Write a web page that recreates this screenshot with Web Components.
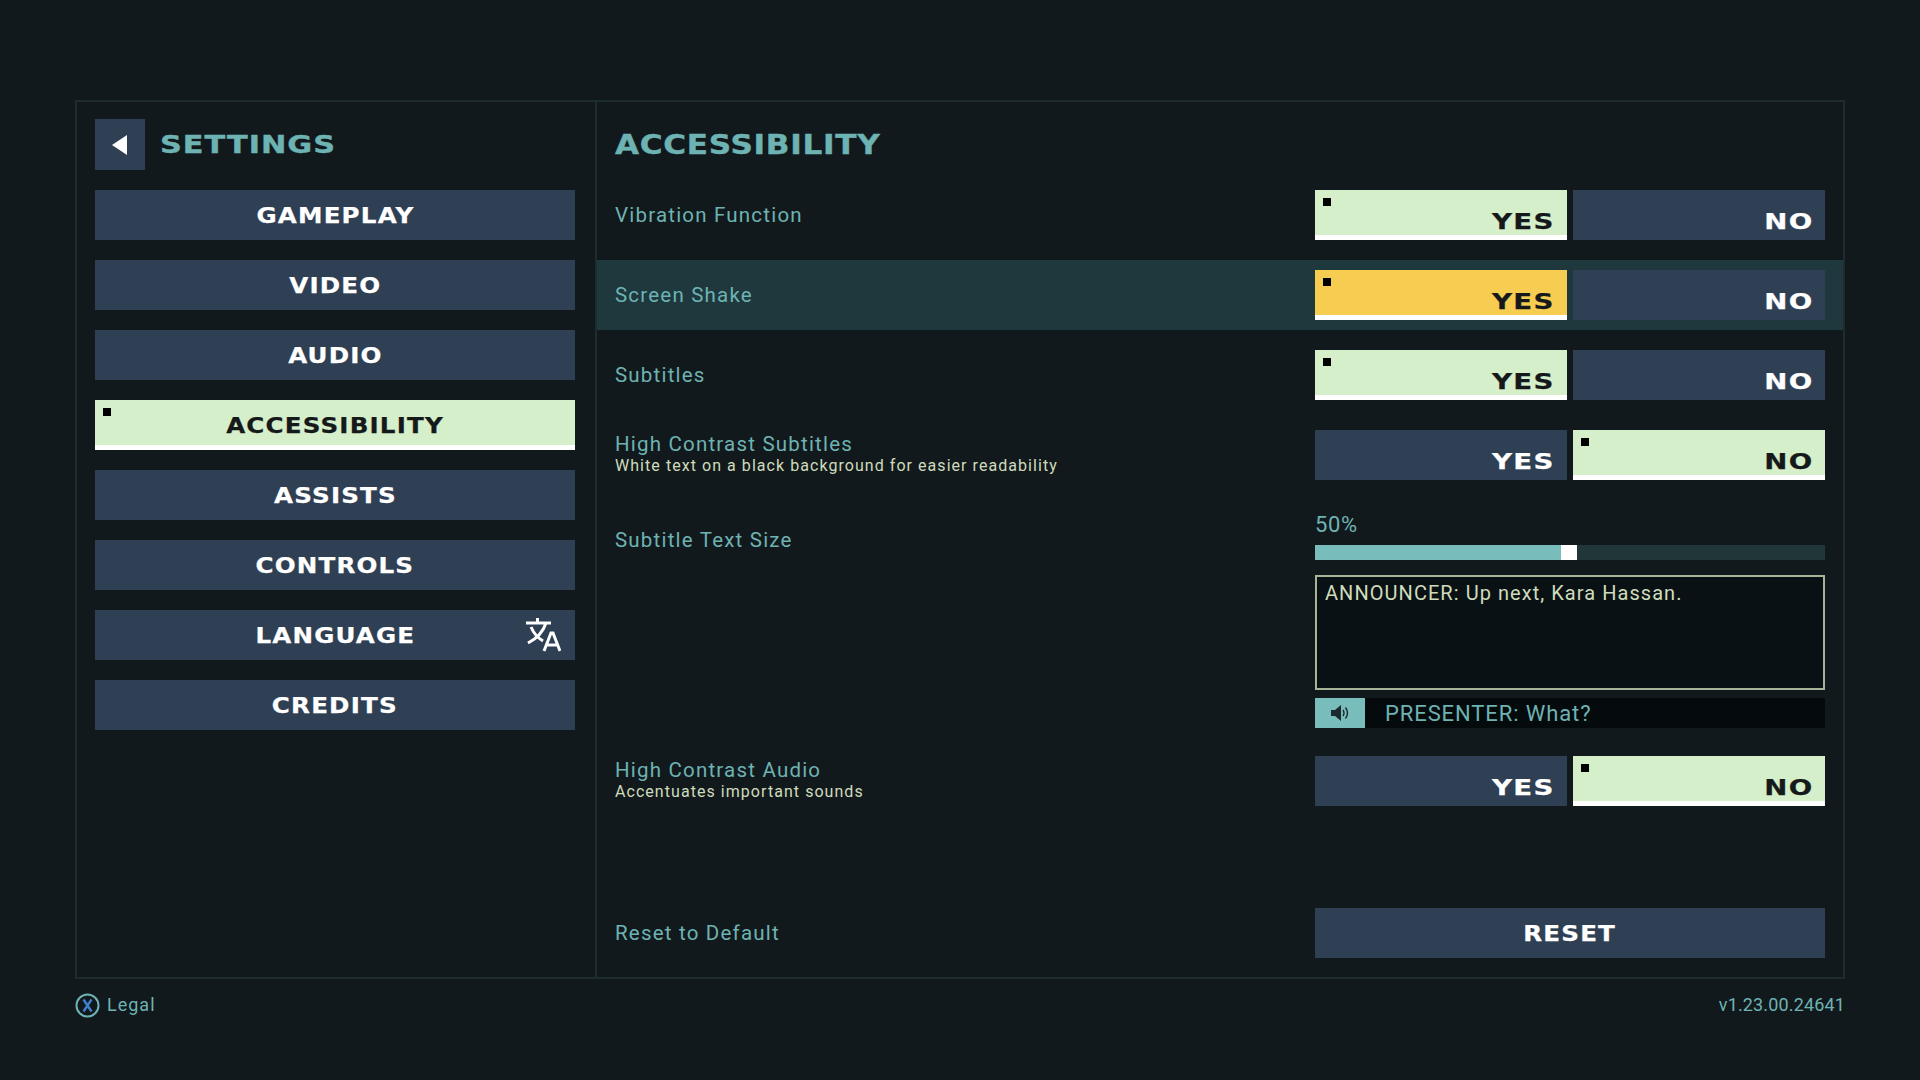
<!DOCTYPE html>
<html lang="en"><head><meta charset="utf-8"><title>Settings</title>
<style>
html,body{margin:0;padding:0;background:#12191c;}
body{width:1920px;height:1080px;overflow:hidden;font-family:"Roboto","Liberation Sans",sans-serif;}
</style></head>
<body>
<settings-screen>
  <settings-nav slot="nav">
    <nav-button>GAMEPLAY</nav-button>
    <nav-button>VIDEO</nav-button>
    <nav-button>AUDIO</nav-button>
    <nav-button selected>ACCESSIBILITY</nav-button>
    <nav-button>ASSISTS</nav-button>
    <nav-button>CONTROLS</nav-button>
    <nav-button icon>LANGUAGE</nav-button>
    <nav-button>CREDITS</nav-button>
  </settings-nav>
  <settings-panel slot="panel" heading="ACCESSIBILITY">
    <option-row label="Vibration Function"><yes-no value="yes"></yes-no></option-row>
    <option-row label="Screen Shake" focused><yes-no value="yes" focused></yes-no></option-row>
    <option-row label="Subtitles"><yes-no value="yes"></yes-no></option-row>
    <option-row label="High Contrast Subtitles" hint="White text on a black background for easier readability"><yes-no value="no"></yes-no></option-row>
    <subtitle-size></subtitle-size>
    <option-row label="High Contrast Audio" hint="Accentuates important sounds"><yes-no value="no"></yes-no></option-row>
    <option-row label="Reset to Default" class="end"><reset-button>RESET</reset-button></option-row>
  </settings-panel>
  <settings-footer slot="footer" version="v1.23.00.24641"></settings-footer>
</settings-screen>
<script>
const BTN='#2f4054',SEL='#d5efca',TEAL='#6db3b3',DIM='#cfdcbc';
function def(name,html,init){
  customElements.define(name,class extends HTMLElement{
    constructor(){super();const r=this.attachShadow({mode:'open'});r.innerHTML=typeof html==='function'?html(this):html;}
    connectedCallback(){
      if(typeof html==='function'){this.shadowRoot.innerHTML=html(this);}
      if(init)init(this);
    }
  });
}
def('wide-text',`<style>:host{display:inline-block;white-space:nowrap;font:700 var(--wt-size,21px)/1 "DejaVu Sans",sans-serif;letter-spacing:var(--wt-ls,1px);transform:scaleX(var(--wt-sx,1.17));transform-origin:var(--wt-origin,center);-webkit-text-stroke:var(--wt-stroke,.25px) currentColor;}</style><slot></slot>`);
def('settings-screen',`<style>
:host{display:flex;flex-direction:column;box-sizing:border-box;width:1920px;height:1080px;padding:100px 75px 0;}
.frame{display:grid;grid-template-columns:520px 1fr;height:879px;border:2px solid #1c2c2f;box-sizing:border-box;}
.l{border-right:2px solid #1c2c2f;min-width:0;}
</style><div class="frame"><div class="l"><slot name="nav"></slot></div><slot name="panel"></slot></div><slot name="footer"></slot>`);
def('settings-nav',`<style>
:host{display:block;box-sizing:border-box;padding:17px 16px 0 18px;}
header{display:flex;align-items:center;gap:15px;height:51px;margin-bottom:20px;}
.b{width:50px;height:51px;background:${BTN};display:flex;align-items:center;justify-content:center;}
wide-text{color:${TEAL};--wt-size:24px;--wt-sx:1.263;--wt-ls:.8px;--wt-origin:left;--wt-stroke:.4px;margin-top:1px;}
.items{display:flex;flex-direction:column;gap:20px;}
</style><header><div class="b"><svg width="16" height="20" viewBox="0 0 16 20"><path d="M15 0V20L0 10Z" fill="#fff"/></svg></div><wide-text>SETTINGS</wide-text></header><div class="items"><slot></slot></div>`);
def('nav-button',el=>`<style>
:host{display:flex;align-items:center;justify-content:center;position:relative;box-sizing:border-box;height:50px;width:480px;padding-top:2px;background:${el.hasAttribute('selected')?SEL:BTN};color:${el.hasAttribute('selected')?'#15191a':'#fff'};${el.hasAttribute('selected')?'border-bottom:5px solid #fff;padding-top:7px;':''}}
.sq{position:absolute;left:8px;top:8px;width:8px;height:8px;background:#000;}
svg{position:absolute;right:14px;top:7px;}
</style>${el.hasAttribute('selected')?'<i class="sq"></i>':''}<wide-text><slot></slot></wide-text>${el.hasAttribute('icon')?`<svg width="36" height="36" viewBox="0 0 36 36" fill="none" stroke="#fff" stroke-width="3"><path d="M1 6H26M12.5 1V6M21 6C18 15 11 22 3 26M6 10C9 17 13 21 18 24"/><path d="M19 34L26 16H28L35 34M21.5 28H32.5"/></svg>`:''}`);
def('settings-panel',el=>`<style>
:host{display:block;min-width:0;}
h2{margin:0;height:78px;padding:30px 18px 0;box-sizing:border-box;font-weight:400;color:${TEAL};--wt-size:26px;--wt-sx:1.195;--wt-ls:.6px;--wt-origin:left;--wt-stroke:.4px;}
.rows{display:flex;flex-direction:column;gap:10px;}
::slotted(option-row.end){margin-top:72px;}
</style><h2><wide-text>${el.getAttribute('heading')||''}</wide-text></h2><div class="rows"><slot></slot></div>`);
def('option-row',el=>`<style>
:host{display:flex;align-items:center;justify-content:space-between;box-sizing:border-box;height:70px;padding:0 18px;${el.hasAttribute('focused')?'background:#1e383e;':''}}
.t{display:flex;flex-direction:column;letter-spacing:1.2px;${el.hasAttribute('hint')?'padding-bottom:3px;':''}}
.n{font-size:20.5px;line-height:24px;color:${TEAL};}
.h{font-size:16px;line-height:20px;color:${DIM};letter-spacing:1.05px;}
</style><div class="t"><div class="n">${el.getAttribute('label')}</div>${el.hasAttribute('hint')?`<div class="h">${el.getAttribute('hint')}</div>`:''}</div><slot></slot>`);
def('yes-no',el=>{const v=el.getAttribute('value'),f=el.hasAttribute('focused');
 const o=(x,l)=>`<option-button ${v===x?'on':''} ${v===x&&f?'focused':''}>${l}</option-button>`;
 return `<style>:host{display:flex;gap:6px;width:510px;}</style>${o('yes','YES')}${o('no','NO')}`});
def('option-button',el=>{const on=el.hasAttribute('on'),f=el.hasAttribute('focused');return `<style>
:host{display:flex;align-items:flex-end;justify-content:flex-end;position:relative;box-sizing:border-box;width:252px;height:50px;padding:0 12px ${on?2.5:7.5}px 0;background:${on?(f?'#f6cd50':SEL):BTN};color:${on?'#15191a':'#fff'};${on?'border-bottom:5px solid #fff;':''}}
.sq{position:absolute;left:8px;top:8px;width:8px;height:8px;background:#000;}
wide-text{--wt-origin:right;--wt-sx:1.315;}
</style>${on?'<i class="sq"></i>':''}<wide-text><slot></slot></wide-text>`});
def('reset-button',`<style>:host{display:flex;align-items:center;justify-content:center;box-sizing:border-box;padding-top:2px;width:510px;height:50px;background:${BTN};color:#fff;}</style><wide-text><slot></slot></wide-text>`);
def('subtitle-size',`<style>
:host{display:flex;justify-content:space-between;box-sizing:border-box;padding:13px 18px 0;height:236px;}
.n{font-size:20.5px;line-height:24px;color:${TEAL};letter-spacing:1.2px;padding-top:15px;}
.c{width:510px;display:flex;flex-direction:column;}
.p{font-size:22px;line-height:24px;color:${TEAL};height:32px;letter-spacing:.6px;}
.track{height:15px;background:#213638;margin-bottom:15px;display:flex;}
.fill{width:246px;background:#78bcbc;}
.th{width:16px;background:#fff;}
.box{height:115px;box-sizing:border-box;border:2px solid #a7b497;background:#0a1114;padding:4px 8px;color:${DIM};font-size:20px;line-height:24px;letter-spacing:1.05px;margin-bottom:8px;}
.bar{display:flex;align-items:center;height:30px;background:#050b0d;color:${TEAL};font-size:22px;letter-spacing:.9px;}
.spk{width:50px;height:30px;background:#78bcbc;display:flex;align-items:center;justify-content:center;margin-right:20px;}
</style><div class="n">Subtitle Text Size</div><div class="c"><div class="p">50%</div><div class="track"><div class="fill"></div><div class="th"></div></div><div class="box">ANNOUNCER: Up next, Kara Hassan.</div><div class="bar"><div class="spk"><svg width="18" height="18" viewBox="0 0 18 18"><path d="M0 6H4L10 1V17L4 12H0Z" fill="#1b2a2e"/><path d="M12 6C13.3 8 13.3 10 12 12M14.5 3.5C17 7 17 11 14.5 14.5" fill="none" stroke="#1b2a2e" stroke-width="1.4"/></svg></div>PRESENTER: What?</div></div>`);
def('settings-footer',el=>`<style>
:host{display:flex;align-items:center;justify-content:space-between;height:52px;color:${TEAL};font-size:18px;letter-spacing:1px;}
.l{display:flex;align-items:center;gap:7px;}
.l span{padding-bottom:2px;}
.v{letter-spacing:.15px;padding-bottom:2px;}
</style><div class="l"><svg width="25" height="25" viewBox="0 0 25 25" fill="none"><circle cx="12.5" cy="12.5" r="11" stroke="#6db3b3" stroke-width="2"/><path d="M8.5 6.5L16.5 18.5M16.5 6.5L8.5 18.5" stroke="#3f7fd0" stroke-width="2.4"/></svg><span>Legal</span></div><div class="v">${el.getAttribute('version')}</div>`);
</script>
</body></html>
